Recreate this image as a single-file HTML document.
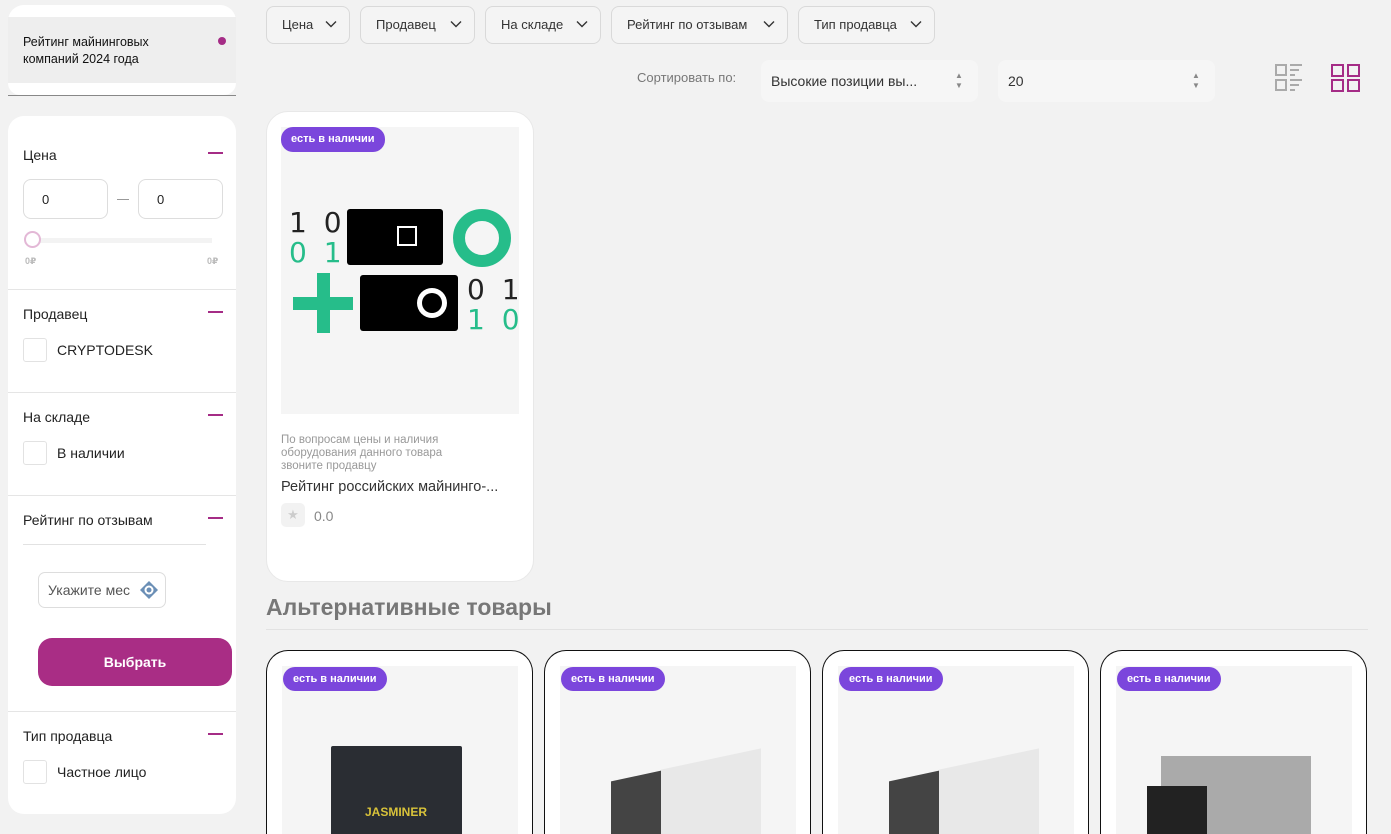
<!DOCTYPE html>
<html style="width:1391px;height:834px;overflow:hidden"><head><meta charset="utf-8"><style>
*{box-sizing:border-box;margin:0;padding:0}
body{width:1391px;height:834px;overflow:hidden;background:#f2f2f2;font-family:"Liberation Sans","DejaVu Sans",sans-serif;color:#222;position:relative}
.a{position:absolute}
.btn{position:absolute;top:6px;height:38px;border:1px solid #d9d9d9;border-radius:8px;background:#f4f4f4;font-size:13px;line-height:36px;padding-left:15px;color:#333}
.btn svg{position:absolute;right:12px;top:13px}
.card{position:absolute;background:#fff;border-radius:16px}
.h{position:absolute;left:23px;font-size:14px;color:#222}
.minus{position:absolute;left:208px;width:15px;height:2px;background:#a52c86}
.sep{position:absolute;left:8px;width:228px;height:1px;background:#e5e5e5}
.cb{position:absolute;left:23px;width:24px;height:24px;border:1px solid #e2e2e2;border-radius:3px;background:#fff}
.lab{position:absolute;left:57px;font-size:14px}
.badge{position:absolute;background:#7b46dc;color:#fff;font-size:11px;font-weight:bold;border-radius:12px;height:24px;line-height:24px;padding:0 10px}
.alt{position:absolute;top:650px;width:267px;height:184px;border:1px solid #111;border-bottom:none;border-radius:22px 22px 0 0;background:#fff;overflow:hidden}
.alt .img{position:absolute;left:15px;top:15px;width:236px;height:200px;background:#f5f5f5}
</style></head><body>
<div class="card" style="left:8px;top:5px;width:228px;height:90px;border-radius:16px 16px 12px 12px"></div>
<div class="a" style="left:8px;top:17px;width:228px;height:66px;background:#eee"></div>
<div class="a" style="left:23px;top:34px;font-size:12.5px;line-height:17px;color:#111">Рейтинг майнинговых<br>компаний 2024 года</div>
<div class="a" style="left:218px;top:37px;width:8px;height:8px;border-radius:50%;background:#a52c86"></div>
<div class="a" style="left:8px;top:95px;width:228px;height:1px;background:#888"></div>

<div class="card" style="left:8px;top:116px;width:228px;height:698px"></div>
<div class="h" style="top:147px">Цена</div><div class="minus" style="top:152px"></div>
<div class="a" style="left:23px;top:179px;width:85px;height:40px;border:1px solid #ddd;border-radius:8px;font-size:13px;padding:12px 0 0 18px">0</div>
<div class="a" style="left:117px;top:199px;width:12px;height:1px;background:#999"></div>
<div class="a" style="left:138px;top:179px;width:85px;height:40px;border:1px solid #ddd;border-radius:8px;font-size:13px;padding:12px 0 0 18px">0</div>
<div class="a" style="left:30px;top:238px;width:182px;height:5px;background:#f3f3f3"></div>
<div class="a" style="left:24px;top:231px;width:17px;height:17px;border-radius:50%;border:2px solid #e3b8d6;background:#fff"></div>
<div class="a" style="left:25px;top:256px;font-size:9px;color:#bbb;font-weight:bold">0₽</div>
<div class="a" style="left:207px;top:256px;font-size:9px;color:#bbb;font-weight:bold">0₽</div>
<div class="sep" style="top:289px"></div>
<div class="h" style="top:306px">Продавец</div><div class="minus" style="top:311px"></div>
<div class="cb" style="top:338px"></div><div class="lab" style="top:342px">CRYPTODESK</div>
<div class="sep" style="top:392px"></div>
<div class="h" style="top:409px">На складе</div><div class="minus" style="top:414px"></div>
<div class="cb" style="top:441px"></div><div class="lab" style="top:445px">В наличии</div>
<div class="sep" style="top:495px"></div>
<div class="h" style="top:512px">Рейтинг по отзывам</div><div class="minus" style="top:517px"></div>
<div class="a" style="left:23px;top:544px;width:183px;height:1px;background:#e2e2e2"></div>
<div class="a" style="left:38px;top:572px;width:128px;height:36px;border:1px solid #ddd;border-radius:7px;font-size:14px;color:#555;padding:9px 0 0 9px">Укажите мес</div>
<svg class="a" style="left:139px;top:580px" width="20" height="20" viewBox="0 0 20 20"><path d="M10 1L19 10L10 19L1 10Z" fill="#6b8fb6"/><circle cx="10" cy="10" r="4.5" fill="#fff"/><circle cx="10" cy="10" r="2.5" fill="#6b8fb6"/></svg>
<div class="a" style="left:38px;top:638px;width:194px;height:48px;border-radius:14px;background:#a92d85;color:#fff;font-weight:bold;font-size:14px;text-align:center;line-height:48px">Выбрать</div>
<div class="sep" style="top:711px"></div>
<div class="h" style="top:728px">Тип продавца</div><div class="minus" style="top:733px"></div>
<div class="cb" style="top:760px"></div><div class="lab" style="top:764px">Частное лицо</div>

<div class="btn" style="left:266px;width:84px">Цена<svg width="12" height="8" viewBox="0 0 12 8"><path d="M1 1.5L6 6.5L11 1.5" stroke="#333" stroke-width="1.4" fill="none"/></svg></div>
<div class="btn" style="left:360px;width:115px">Продавец<svg width="12" height="8" viewBox="0 0 12 8"><path d="M1 1.5L6 6.5L11 1.5" stroke="#333" stroke-width="1.4" fill="none"/></svg></div>
<div class="btn" style="left:485px;width:116px">На складе<svg width="12" height="8" viewBox="0 0 12 8"><path d="M1 1.5L6 6.5L11 1.5" stroke="#333" stroke-width="1.4" fill="none"/></svg></div>
<div class="btn" style="left:611px;width:177px">Рейтинг по отзывам<svg width="12" height="8" viewBox="0 0 12 8"><path d="M1 1.5L6 6.5L11 1.5" stroke="#333" stroke-width="1.4" fill="none"/></svg></div>
<div class="btn" style="left:798px;width:137px">Тип продавца<svg width="12" height="8" viewBox="0 0 12 8"><path d="M1 1.5L6 6.5L11 1.5" stroke="#333" stroke-width="1.4" fill="none"/></svg></div>

<div class="a" style="left:637px;top:70px;font-size:13px;color:#777">Сортировать по:</div>
<div class="a" style="left:761px;top:60px;width:217px;height:42px;background:#f6f6f6;border-radius:8px;font-size:14px;padding:13px 0 0 10px;color:#333">Высокие позиции вы...</div>
<div class="a" style="left:955px;top:71px;font-size:8px;line-height:10px;color:#888">▲<br>▼</div>
<div class="a" style="left:998px;top:60px;width:217px;height:42px;background:#f6f6f6;border-radius:8px;font-size:14px;padding:13px 0 0 10px;color:#333">20</div>
<div class="a" style="left:1192px;top:71px;font-size:8px;line-height:10px;color:#888">▲<br>▼</div>
<svg class="a" style="left:1275px;top:63px" width="28" height="29" viewBox="0 0 28 29"><g fill="none" stroke="#aaa" stroke-width="2"><rect x="1" y="2" width="10" height="10"/><rect x="1" y="17" width="10" height="10"/></g><g fill="#aaa"><rect x="15" y="1" width="12" height="2"/><rect x="15" y="6" width="9" height="2"/><rect x="15" y="11" width="5" height="2"/><rect x="15" y="16" width="12" height="2"/><rect x="15" y="21" width="9" height="2"/><rect x="15" y="26" width="5" height="2"/></g></svg>
<svg class="a" style="left:1331px;top:64px" width="29" height="28" viewBox="0 0 29 28"><g fill="none" stroke="#a52c86" stroke-width="2"><rect x="1" y="1" width="11" height="11"/><rect x="17" y="1" width="11" height="11"/><rect x="1" y="16" width="11" height="11"/><rect x="17" y="16" width="11" height="11"/></g></svg>

<div class="card" style="left:266px;top:111px;width:268px;height:471px;border:1px solid #e8e8e8;border-radius:22px"></div>
<div class="a" style="left:281px;top:127px;width:238px;height:287px;background:#f5f5f5"></div>
<div class="badge" style="left:281px;top:127px;height:25px;line-height:25px">есть в наличии</div>
<div class="a" style="left:289px;top:208px;font-size:28px;line-height:30px;letter-spacing:4px;font-family:'DejaVu Sans',sans-serif">1 0<br><span style="color:#26bd8a">0 1</span></div>
<div class="a" style="left:347px;top:209px;width:96px;height:56px;background:#000;border-radius:3px"></div>
<div class="a" style="left:397px;top:226px;width:20px;height:20px;border:2px solid #fff"></div>
<div class="a" style="left:453px;top:209px;width:58px;height:58px;border-radius:50%;border:12px solid #26bd8a"></div>
<div class="a" style="left:293px;top:297px;width:60px;height:13px;background:#26bd8a"></div>
<div class="a" style="left:317px;top:273px;width:13px;height:60px;background:#26bd8a"></div>
<div class="a" style="left:360px;top:275px;width:98px;height:56px;background:#000;border-radius:3px"></div>
<div class="a" style="left:417px;top:288px;width:30px;height:30px;border-radius:50%;background:#fff"></div>
<div class="a" style="left:422px;top:293px;width:20px;height:20px;border-radius:50%;background:#000"></div>
<div class="a" style="left:467px;top:275px;font-size:28px;line-height:30px;letter-spacing:4px;font-family:'DejaVu Sans',sans-serif">0 1<br><span style="color:#26bd8a">1 0</span></div>
<div class="a" style="left:281px;top:434px;font-size:11.5px;line-height:13px;color:#999">По вопросам цены и наличия<br>оборудования данного товара<br>звоните продавцу</div>
<div class="a" style="left:281px;top:479px;font-size:14.5px;color:#333">Рейтинг российских майнинго-...</div>
<div class="a" style="left:281px;top:503px;width:24px;height:24px;background:#f2f2f2;border-radius:5px;color:#ccc;font-size:13px;text-align:center;line-height:24px">★</div>
<div class="a" style="left:314px;top:508px;font-size:14px;color:#888">0.0</div>

<div class="a" style="left:266px;top:594px;font-size:23px;font-weight:bold;color:#777">Альтернативные товары</div>
<div class="a" style="left:266px;top:629px;width:1102px;height:1px;background:#e2e2e2"></div>

<div class="alt" style="left:266px"><div class="img"></div><div class="badge" style="left:16px;top:16px">есть в наличии</div>
<div class="a" style="left:64px;top:95px;width:131px;height:110px;background:#2a2d33;border-radius:2px"></div>
<div class="a" style="left:98px;top:154px;font-size:12px;font-weight:bold;color:#d8c23a">JASMINER</div></div>
<div class="alt" style="left:544px"><div class="img"></div><div class="badge" style="left:16px;top:16px">есть в наличии</div>
<div class="a" style="left:66px;top:125px;width:50px;height:80px;background:#444;transform:skewY(-12deg)"></div><div class="a" style="left:116px;top:108px;width:100px;height:100px;background:#e8e8e8;transform:skewY(-12deg)"></div></div>
<div class="alt" style="left:822px"><div class="img"></div><div class="badge" style="left:16px;top:16px">есть в наличии</div>
<div class="a" style="left:66px;top:125px;width:50px;height:80px;background:#444;transform:skewY(-12deg)"></div><div class="a" style="left:116px;top:108px;width:100px;height:100px;background:#e8e8e8;transform:skewY(-12deg)"></div></div>
<div class="alt" style="left:1100px"><div class="img"></div><div class="badge" style="left:16px;top:16px">есть в наличии</div>
<div class="a" style="left:60px;top:105px;width:150px;height:100px;background:#aaa"></div><div class="a" style="left:46px;top:135px;width:60px;height:70px;background:#222"></div></div>
</body></html>
